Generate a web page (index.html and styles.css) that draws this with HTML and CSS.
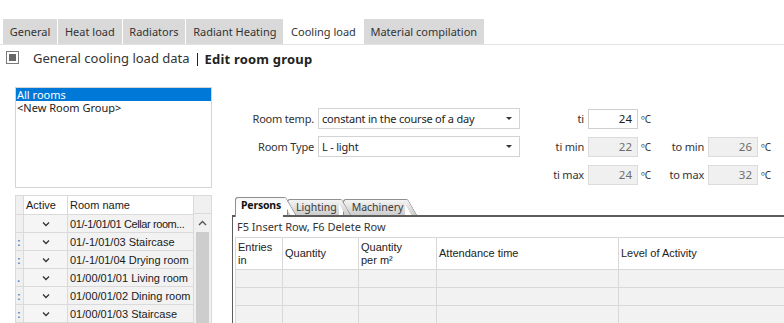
FILE: index.html
```html
<!DOCTYPE html>
<html lang="en">
<head>
  <meta charset="UTF-8" />
  <title>Cooling load — Edit room group</title>
  <link rel="stylesheet" href="styles.css">
</head>
<body>

<!-- Main tabs -->
<div class="tabbar">
  <div class="tab">General</div>
  <div class="tab">Heat load</div>
  <div class="tab">Radiators</div>
  <div class="tab">Radiant Heating</div>
  <div class="tab active">Cooling load</div>
  <div class="tab">Material compilation</div>
</div>

<!-- Breadcrumb -->
<div class="titlebar">
  <span class="toggle"><span class="toggle-fill"></span></span>
  <span class="title">General cooling load data</span>
  <span class="sep"></span>
  <span class="title-strong">Edit room group</span>
</div>

<div class="main">

  <!-- Left: groups and rooms -->
  <div class="left">
    <div class="listbox">
      <div class="list-item selected">All rooms</div>
      <div class="list-item">&lt;New Room Group&gt;</div>
    </div>

    <div class="rooms">
      <table class="rooms-table">
        <colgroup>
          <col class="c-rh" />
          <col class="c-active" />
          <col class="c-name" />
        </colgroup>
        <thead>
          <tr><th class="rh"></th><th>Active</th><th>Room name</th></tr>
        </thead>
        <tbody>
          <tr><td class="rh"></td><td class="chk"><svg width="8" height="6" viewBox="0 0 8 6"><path d="M1 1.5 L4 4.5 L7 1.5" fill="none" stroke="#333" stroke-width="1.3"/></svg></td><td class="long">01/-1/01/01 Cellar room...</td></tr>
          <tr><td class="rh"><span class="rh-num">:</span></td><td class="chk"><svg width="8" height="6" viewBox="0 0 8 6"><path d="M1 1.5 L4 4.5 L7 1.5" fill="none" stroke="#333" stroke-width="1.3"/></svg></td><td>01/-1/01/03 Staircase</td></tr>
          <tr><td class="rh"><span class="rh-num">:</span></td><td class="chk"><svg width="8" height="6" viewBox="0 0 8 6"><path d="M1 1.5 L4 4.5 L7 1.5" fill="none" stroke="#333" stroke-width="1.3"/></svg></td><td>01/-1/01/04 Drying room</td></tr>
          <tr><td class="rh"><span class="rh-num">.</span></td><td class="chk"><svg width="8" height="6" viewBox="0 0 8 6"><path d="M1 1.5 L4 4.5 L7 1.5" fill="none" stroke="#333" stroke-width="1.3"/></svg></td><td>01/00/01/01 Living room</td></tr>
          <tr><td class="rh"><span class="rh-num">:</span></td><td class="chk"><svg width="8" height="6" viewBox="0 0 8 6"><path d="M1 1.5 L4 4.5 L7 1.5" fill="none" stroke="#333" stroke-width="1.3"/></svg></td><td>01/00/01/02 Dining room</td></tr>
          <tr><td class="rh"><span class="rh-num">:</span></td><td class="chk"><svg width="8" height="6" viewBox="0 0 8 6"><path d="M1 1.5 L4 4.5 L7 1.5" fill="none" stroke="#333" stroke-width="1.3"/></svg></td><td>01/00/01/03 Staircase</td></tr>
          <tr><td class="rh"></td><td class="chk"></td><td></td></tr>
        </tbody>
      </table>
      <div class="vscroll">
        <div class="vs-head"></div>
        <div class="vs-up"><svg width="9" height="6" viewBox="0 0 9 6"><path d="M1 5 L4.5 1.5 L8 5" fill="none" stroke="#555" stroke-width="1.4"/></svg></div>
        <div class="vs-thumb"></div>
      </div>
    </div>
  </div>

  <!-- Right: room settings -->
  <div class="right">
    <div class="form">
      <span class="lbl">Room temp.</span>
      <div class="select">constant in the course of a day<span class="caret"></span></div>
      <span class="lbl">ti</span>
      <div class="num">24</div>
      <span class="unit">ºC</span>
      <span></span><span></span><span></span>

      <span class="lbl">Room Type</span>
      <div class="select">L - light<span class="caret"></span></div>
      <span class="lbl">ti min</span>
      <div class="num disabled">22</div>
      <span class="unit">ºC</span>
      <span class="lbl">to min</span>
      <div class="num disabled">26</div>
      <span class="unit">ºC</span>

      <span></span><span></span>
      <span class="lbl">ti max</span>
      <div class="num disabled">24</div>
      <span class="unit">ºC</span>
      <span class="lbl">to max</span>
      <div class="num disabled">32</div>
      <span class="unit">ºC</span>
    </div>

    <div class="panel">
      <div class="ptabs">
        <div class="ptab ptab-active">Persons</div>
        <div class="ptab ptab-2">Lighting</div>
        <div class="ptab ptab-3">Machinery</div>
      </div>
      <div class="pbody">
        <div class="hint">F5 Insert Row, F6 Delete Row</div>
        <table class="grid">
          <colgroup>
            <col class="g1" /><col class="g2" /><col class="g3" /><col class="g4" /><col />
          </colgroup>
          <thead>
            <tr>
              <th class="top">Entries<br>in</th>
              <th>Quantity</th>
              <th class="top">Quantity<br>per m²</th>
              <th>Attendance time</th>
              <th>Level of Activity</th>
            </tr>
          </thead>
          <tbody>
            <tr><td></td><td></td><td></td><td></td><td></td></tr>
            <tr><td></td><td></td><td></td><td></td><td></td></tr>
            <tr><td></td><td></td><td></td><td></td><td></td></tr>
          </tbody>
        </table>
      </div>
    </div>
  </div>

</div>

</body>
</html>
```

FILE: styles.css
```css
*, *::before, *::after { box-sizing: border-box; margin: 0; padding: 0; }

:root {
  --text:       #222222;
  --text-soft:  #333333;
  --text-muted: #6d6d6d;
  --tab-bg:     #d9d9d9;
  --line:       #d4d4d4;
  --cell-bg:    #f2f2f2;
  --select:     #0078d7;
  --dark-line:  #5c5c5c;
}

html, body {
  width: 784px;
  height: 323px;
  overflow: hidden;
  background: #ffffff;
}

body {
  font-family: 'Noto Sans', 'DejaVu Sans', sans-serif;
  font-size: 11px;
  color: var(--text);
}

/* ---------- main tabs ---------- */

.tabbar {
  display: flex;
  gap: 1px;
  padding: 19px 0 0 3px;
  border-bottom: 1px solid #e2e2e2;
}

.tab {
  height: 25px;
  line-height: 25px;
  padding: 0 6.8px;
  background: var(--tab-bg);
  color: var(--text-soft);
  font-size: 11px;
  white-space: nowrap;
}

.tab.active { background: #ffffff; }

/* ---------- breadcrumb ---------- */

.titlebar {
  display: flex;
  align-items: center;
  height: 26px;
  padding-left: 6px;
}

.toggle {
  width: 13px;
  height: 13px;
  border: 1px solid #7a7a7a;
  padding: 2px;
  margin-right: 14px;
  margin-top: -1px;
}

.toggle-fill {
  display: block;
  width: 100%;
  height: 100%;
  background: #666666;
}

.title {
  font-size: 13px;
  color: var(--text-soft);
}

.sep {
  width: 1px;
  height: 13px;
  background: #222;
  margin: 2px 7px 0 7px;
}

.title-strong {
  font-size: 13px;
  font-weight: 700;
  color: var(--text);
  margin-top: 2px;
  letter-spacing: 0.2px;
}

/* ---------- layout ---------- */

.main {
  display: flex;
  margin-top: 16px;
}

.left {
  width: 197px;
  margin-left: 15px;
  flex-shrink: 0;
}

.right {
  flex: 1;
  min-width: 0;
  margin-left: 20px;
  padding-top: 21px;
}

/* ---------- list box ---------- */

.listbox {
  height: 101px;
  border: 1px solid var(--line);
}

.list-item {
  height: 13px;
  line-height: 13px;
  padding-left: 1px;
  font-size: 11px;
  white-space: nowrap;
  overflow: hidden;
}

.list-item.selected {
  background: var(--select);
  color: #ffffff;
}

/* ---------- rooms grid ---------- */

.rooms {
  display: flex;
  margin-top: 7px;
  font-family: 'Liberation Sans', Arial, sans-serif;
  font-size: 11px;
}

.rooms-table {
  width: 178px;
  border-collapse: collapse;
  table-layout: fixed;
}

.c-rh { width: 8px; }
.c-active { width: 44px; }
.c-name { width: 126px; }

.rooms-table th,
.rooms-table td {
  border: 1px solid #dadada;
  height: 18px;
  padding: 0 1px 0 2px;
  text-align: left;
  font-weight: 400;
  white-space: nowrap;
  overflow: hidden;
  text-overflow: ellipsis;
  background: var(--cell-bg);
  color: #1a1a1a;
}

.rooms-table td.long {
  padding-right: 0;
  letter-spacing: -0.4px;
}

.rooms-table th {
  height: 19px;
  background: #ffffff;
}

.rooms-table .rh {
  padding: 0;
  background: #f0f0f0;
  text-overflow: clip;
}

.rh-num {
  display: block;
  padding-left: 1px;
  color: #3b8fd6;
  font-weight: 700;
}

.rooms-table td.chk {
  padding: 0;
  text-align: center;
  background: #f5f5f5;
}

.chk svg { display: block; margin: 0 auto; }

.vscroll {
  width: 19px;
  border-right: 1px solid #dadada;
  display: flex;
  flex-direction: column;
  background: #f0f0f0;
}

.vs-head {
  height: 19px;
  border-top: 1px solid #dadada;
  border-bottom: 1px solid #dadada;
  background: #f0f0f0;
}

.vs-up {
  height: 18px;
  display: flex;
  align-items: center;
  justify-content: center;
}

.vs-thumb {
  flex: 1;
  height: 120px;
  margin: 0 2px 0 2px;
  background: #cdcdcd;
}

/* ---------- room settings form ---------- */

.form {
  display: grid;
  grid-template-columns: 86px 202px 68px 50px 28px 42px 50px auto;
  grid-auto-rows: 21px;
  row-gap: 7px;
  align-items: center;
}

.lbl {
  text-align: right;
  padding-right: 4px;
  color: var(--text-soft);
  white-space: nowrap;
  letter-spacing: -0.2px;
}

.select {
  position: relative;
  height: 21px;
  line-height: 19px;
  padding-left: 3px;
  border: 1px solid #d3d3d3;
  background: #ffffff;
  white-space: nowrap;
  letter-spacing: -0.2px;
}

.caret {
  position: absolute;
  right: 7px;
  top: 8px;
  border-left: 3px solid transparent;
  border-right: 3px solid transparent;
  border-top: 3px solid #333;
}

.num {
  height: 20px;
  line-height: 18px;
  padding-right: 5px;
  text-align: right;
  border: 1px solid #cfcfcf;
  background: #ffffff;
  font-size: 11.5px;
}

.num.disabled {
  background: #f0f0f0;
  border-color: #dcdcdc;
  color: var(--text-muted);
}

.unit {
  padding-left: 3px;
  font-size: 10px;
  color: var(--text-soft);
}

/* ---------- lower panel ---------- */

.panel { margin-top: 12px; }

.ptabs {
  display: flex;
  align-items: flex-end;
  height: 18px;
  padding-left: 3px;
}

.ptab {
  position: relative;
  height: 16px;
  line-height: 14px;
  padding: 0 2px 0 5px;
  border: 1px solid #8f8f8f;
  border-right: none;
  border-bottom: none;
  border-top-left-radius: 3px;
  background: linear-gradient(#f4f4f4, #cdcdcd);
  font-size: 10.5px;
  color: #3a3a3a;
  white-space: nowrap;
}

.ptab::after {
  content: "";
  position: absolute;
  top: -1px;
  left: calc(100% - 3px);
  width: 6px;
  height: calc(100% + 1px);
  border-top: 1px solid #8f8f8f;
  border-right: 1px solid #8f8f8f;
  border-top-right-radius: 2px;
  background: linear-gradient(#f4f4f4, #cdcdcd);
  transform: skewX(30deg);
  transform-origin: top left;
}

.ptab-active {
  z-index: 3;
  height: 17px;
  margin-bottom: -2px;
  padding-bottom: 2px;
  box-sizing: content-box;
  font-weight: 700;
  color: #111;
  letter-spacing: -0.2px;
  background: linear-gradient(#f6f6f6, #ffffff 60%);
}

.ptab-active::after {
  background: linear-gradient(#f6f6f6, #ffffff 60%);
  height: calc(100% - 1px);
}

.ptab-2 { z-index: 2; margin-left: 4px; padding-left: 8px; }
.ptab-3 { z-index: 1; margin-left: 4px; padding-left: 8px; }

.pbody {
  border-top: 2px solid var(--dark-line);
  border-left: 1px solid var(--dark-line);
  padding-left: 2px;
  height: 120px;
  overflow: hidden;
}

.hint {
  height: 20px;
  line-height: 20px;
  padding-left: 2px;
  color: var(--text-soft);
}

.grid {
  width: 560px;
  border-collapse: collapse;
  table-layout: fixed;
  font-family: 'Liberation Sans', Arial, sans-serif;
  font-size: 11px;
}

.g1 { width: 47px; }
.g2 { width: 76px; }
.g3 { width: 78px; }
.g4 { width: 182px; }

.grid th,
.grid td {
  border: 1px solid #d8d8d8;
  height: 18px;
  padding: 0 0 0 2px;
  text-align: left;
  font-weight: 400;
  color: #222;
  background: var(--cell-bg);
}

.grid th {
  height: 32px;
  background: #ffffff;
  line-height: 13px;
}

.grid th.top {
  vertical-align: top;
  padding-top: 3px;
}
```
